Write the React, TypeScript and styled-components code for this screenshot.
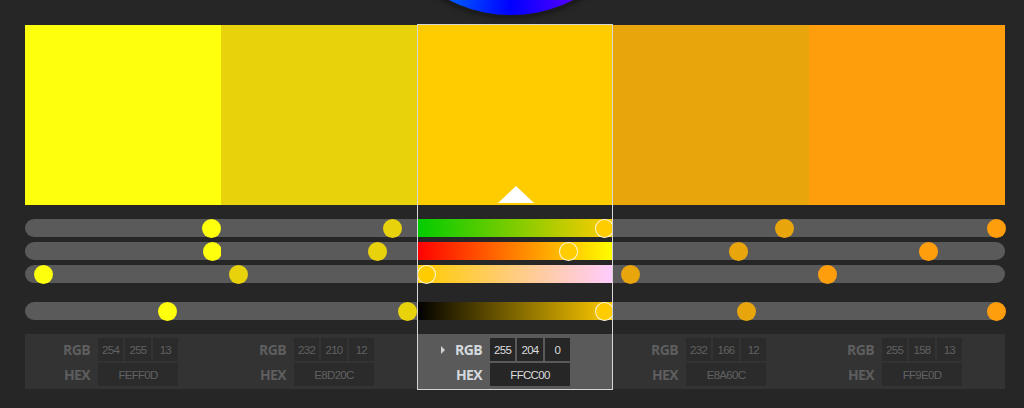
import React from 'react';
import styled, {createGlobalStyle, css} from "styled-components";

const GlobalStyle = createGlobalStyle`
  html, body {
    margin: 0;
    padding: 0;
    background: #262626;
  }
`

const Page = styled.div`
  width: 1024px;
  height: 408px;
  overflow: hidden;
  background-color: #262626;
  font-family: "Liberation Sans", Arial, sans-serif;
`
const WheelStrip = styled.div`
  height: 24px;
  overflow: hidden;
  display: flex;
  justify-content: center;
  padding-right: 2px;
`
const Wheel = styled.div`
  flex: none;
  width: 272px;
  height: 272px;
  margin-top: -257px;
  border-radius: 50%;
  background: conic-gradient(from 180deg, #0000ff, #0099ff, #00ffcc, #00ff00, #ffff00, #ff0000, #ff00cc, #8800ff, #0000ff);
  box-shadow: 0 0 0 3px #1c1c1c, 0 2px 6px rgba(0, 0, 0, 0.6);
`
const Columns = styled.div`
  display: grid;
  grid-template-columns: repeat(5, 196px);
  padding: 0 25px;
`
const Column = styled.div<{ $selected: boolean }>`
  position: relative;
  display: flex;
  flex-direction: column;
  padding: 1px 0;

  ${p => p.$selected && css`
    &::after {
      content: "";
      position: absolute;
      inset: 0;
      border: 1px solid #d6d6d6;
      pointer-events: none;
    }
  `}
`
const Swatch = styled.div<{ $color: string }>`
  height: 180px;
  background-color: ${p => p.$color};
  display: flex;
  align-items: flex-end;
  justify-content: center;
  padding-bottom: 2px;
  box-sizing: border-box;
`
const Caret = styled.div`
  width: 0;
  height: 0;
  border-left: 18px solid transparent;
  border-right: 18px solid transparent;
  border-bottom: 17px solid #ffffff;
  margin-left: 1px;
`
const Sliders = styled.div`
  margin-top: 14px;
  display: flex;
  flex-direction: column;
  gap: 5px;
`
const Track = styled.div<{ $edge: 'left' | 'right' | 'none'; $spaced?: boolean }>`
  position: relative;
  height: 18px;
  background: #5a5a5a;
  margin-top: ${p => p.$spaced ? '14px' : '0'};
  border-radius: ${p => p.$edge === 'left' ? '9px 0 0 9px' : p.$edge === 'right' ? '0 9px 9px 0' : '0'};
`
const Knob = styled.span<{ $color: string; $hollow: boolean }>`
  position: absolute;
  top: -0.5px;
  width: 19px;
  height: 19px;
  box-sizing: border-box;
  border-radius: 50%;
  background-color: ${p => p.$color};
  border: ${p => p.$hollow ? '1.5px solid rgba(255,255,255,0.85)' : 'none'};
`
const Panel = styled.div<{ $selected: boolean }>`
  margin-top: 14px;
  height: 55px;
  box-sizing: border-box;
  padding-top: 4px;
  background-color: ${p => p.$selected ? '#5a5a5a' : '#333333'};
  display: grid;
  grid-template-columns: 65px 80px;
  grid-auto-rows: 23px;
  column-gap: 8px;
  row-gap: 2px;
`
const Label = styled.div<{ $selected: boolean }>`
  display: flex;
  align-items: center;
  justify-content: flex-end;
  font-family: "Open Sans", "Liberation Sans", sans-serif;
  font-weight: 700;
  font-size: 14px;
  letter-spacing: -0.6px;
  color: ${p => p.$selected ? '#d4d9de' : '#5e5e5e'};
`
const Arrow = styled.span`
  width: 0;
  height: 0;
  border-top: 4px solid transparent;
  border-bottom: 4px solid transparent;
  border-left: 4px solid #d0d0d0;
  margin-right: 10px;
`
const Boxes = styled.div`
  display: grid;
  grid-template-columns: repeat(3, 1fr);
  gap: 2px;
`
const Box = styled.div<{ $selected: boolean }>`
  display: flex;
  align-items: center;
  justify-content: center;
  font-size: 11.5px;
  letter-spacing: -0.7px;
  background-color: ${p => p.$selected ? '#262626' : '#2b2b2b'};
  color: ${p => p.$selected ? '#dcdcdc' : '#616161'};
`

type Swatch = {
    hex: string
    rgb: [number, number, number]
    knobs: number[]
}

const swatches: Swatch[] = [
    {hex: 'FEFF0D', rgb: [254, 255, 13], knobs: [254 / 255, 255 / 255, 13 / 255, 0.747]},
    {hex: 'E8D20C', rgb: [232, 210, 12], knobs: [232 / 255, 210 / 255, 12 / 255, 0.994]},
    {hex: 'FFCC00', rgb: [255, 204, 0], knobs: [1, 204 / 255, 0, 1]},
    {hex: 'E8A60C', rgb: [232, 166, 12], knobs: [232 / 255, 166 / 255, 12 / 255, 0.697]},
    {hex: 'FF9E0D', rgb: [255, 158, 13], knobs: [1, 158 / 255, 13 / 255, 1]},
]

const selectedIndex = 2

const gradients = (r: number, g: number, b: number) => [
    `linear-gradient(to right, rgb(0,${g},${b}), rgb(255,${g},${b}))`,
    `linear-gradient(to right, rgb(${r},0,${b}), rgb(${r},255,${b}))`,
    `linear-gradient(to right, rgb(${r},${g},0), rgb(${r},${g},255))`,
    `linear-gradient(to right, #000000, rgb(${r},${g},${b}))`,
]

const App: React.FC = () => {
    return (
        <Page>
            <GlobalStyle/>
            <WheelStrip><Wheel/></WheelStrip>
            <Columns>
                {swatches.map((s, i) => {
                    const selected = i === selectedIndex
                    const color = '#' + s.hex
                    const edge = i === 0 ? 'left' : i === swatches.length - 1 ? 'right' : 'none'
                    const grads = gradients(...s.rgb)
                    return (
                        <Column key={s.hex} $selected={selected}>
                            <Swatch $color={color}>{selected && <Caret/>}</Swatch>
                            <Sliders>
                                {s.knobs.map((t, row) => (
                                    <Track key={row} $edge={edge} $spaced={row === 3}
                                           style={selected ? {background: grads[row]} : undefined}>
                                        <Knob $color={color} $hollow={selected} style={{left: t * 178}}/>
                                    </Track>
                                ))}
                            </Sliders>
                            <Panel $selected={selected}>
                                <Label $selected={selected}>{selected && <Arrow/>}RGB</Label>
                                <Boxes>
                                    {s.rgb.map((v, k) => <Box key={k} $selected={selected}>{v}</Box>)}
                                </Boxes>
                                <Label $selected={selected}>HEX</Label>
                                <Box $selected={selected}>{s.hex}</Box>
                            </Panel>
                        </Column>
                    )
                })}
            </Columns>
        </Page>
    );
};
export default App;
